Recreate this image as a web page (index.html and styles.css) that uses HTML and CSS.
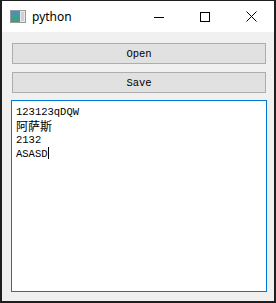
FILE: index.html
```html
<!DOCTYPE html>
<html lang="en">
<head>
    <meta charset="UTF-8">
    <title>python</title>
    <link rel="stylesheet" href="styles.css">
</head>
<body>
    <div class="window">
        <div class="titlebar">
            <svg class="app-icon" width="16" height="13" viewBox="0 0 16 13">
                <defs>
                    <linearGradient id="g" x1="0" y1="0" x2="0" y2="1">
                        <stop offset="0" stop-color="#4a8fc9"/>
                        <stop offset="1" stop-color="#3aa56a"/>
                    </linearGradient>
                </defs>
                <rect x="0.5" y="0.5" width="15" height="12" fill="#e8e8e8" stroke="#9a9a9a"/>
                <rect x="1" y="1" width="9" height="11" fill="url(#g)"/>
                <rect x="11" y="2" width="3" height="9" fill="#cfcfcf"/>
            </svg>
            <span class="title">python</span>
            <div class="controls">
                <span class="ctl">
                    <svg width="10" height="10" viewBox="0 0 10 10"><path d="M0 5.5H10" stroke="#000" stroke-width="1"/></svg>
                </span>
                <span class="ctl">
                    <svg width="10" height="10" viewBox="0 0 10 10"><rect x="0.5" y="0.5" width="9" height="9" fill="none" stroke="#000"/></svg>
                </span>
                <span class="ctl">
                    <svg width="11" height="11" viewBox="0 0 11 11"><path d="M0.5 0.5L10.5 10.5M10.5 0.5L0.5 10.5" stroke="#000" stroke-width="1"/></svg>
                </span>
            </div>
        </div>
        <div class="client">
            <button class="btn">Open</button>
            <button class="btn">Save</button>
            <div class="editor">
                <div class="line">123123qDQW</div>
                <div class="line"><span class="cjk">阿萨斯</span></div>
                <div class="line">2132</div>
                <div class="line">ASASD<span class="caret"></span></div>
            </div>
        </div>
    </div>
</body>
</html>
```

FILE: styles.css
```css
body {
    margin: 0;
    background: #1f1f1f;
    width: 276px;
    height: 303px;
    overflow: hidden;
}
.window {
    margin: 1px 2px 2px 2px;
    height: 300px;
    display: flex;
    flex-direction: column;
    background: #f0f0f0;
}
.titlebar {
    height: 31px;
    background: #fff;
    display: flex;
    align-items: center;
    font-family: "Noto Sans", sans-serif;
    font-size: 12px;
    color: #000;
}
.app-icon {
    margin-left: 8px;
    margin-right: 6px;
}
.title {
    flex: 1;
    padding-bottom: 1px;
}
.controls {
    display: flex;
    height: 100%;
}
.ctl {
    width: 46px;
    display: flex;
    align-items: center;
    justify-content: center;
}
.client {
    flex: 1;
    display: flex;
    flex-direction: column;
    padding: 11px 8px 9px 10px;
}
.btn {
    height: 21px;
    margin: 0 0 8px 0;
    padding: 0;
    background: #e1e1e1;
    border: 1px solid #adadad;
    font-family: "Liberation Mono", monospace;
    font-size: 10.5px;
    color: #000;
}
.btn + .btn {
    margin-bottom: 7px;
}
.editor {
    flex: 1;
    margin: 0 -1px;
    background: #fff;
    border: 1px solid #0078d7;
    padding: 4px 4px;
    font-family: "Liberation Mono", "Noto Sans CJK SC", monospace;
    font-size: 10.5px;
    color: #000;
}
.line {
    height: 14px;
    line-height: 14px;
}
.cjk {
    font-family: "Noto Sans CJK SC", sans-serif;
    font-size: 12px;
}
.caret {
    display: inline-block;
    width: 1px;
    height: 12px;
    background: #000;
    vertical-align: -2px;
}
```
